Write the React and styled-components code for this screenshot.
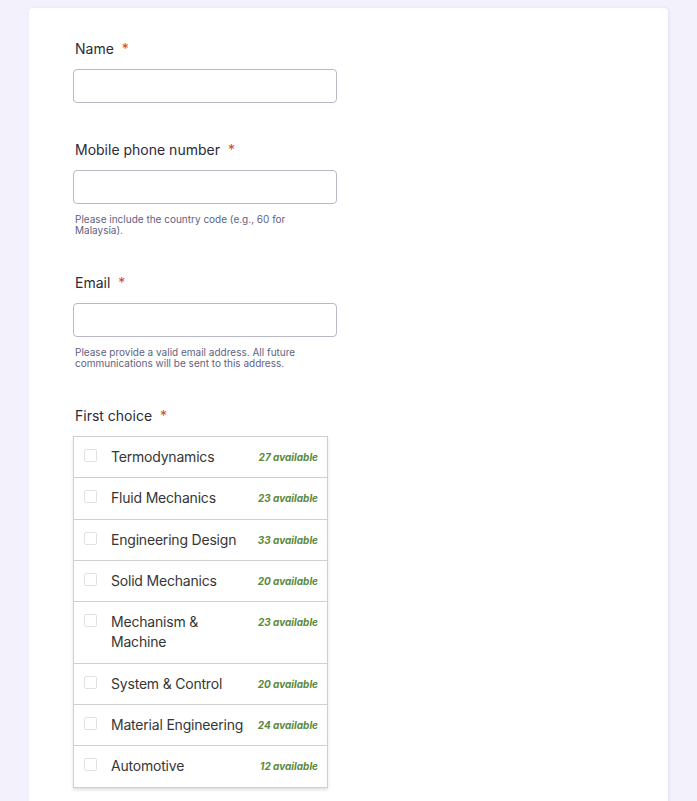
import React from 'react';
import styled, { createGlobalStyle } from 'styled-components';

const GlobalStyle = createGlobalStyle`
    html, body {
        margin: 0;
        padding: 0;
        background-color: #f3f1fc;
        font-family: Inter, "Noto Sans", sans-serif;
    }
    * {
        box-sizing: border-box;
    }
`;

const Page = styled.div`
    padding: 8px 29px 0 29px;
`;

const FormCard = styled.div`
    background-color: white;
    border-radius: 4px;
    box-shadow: 1px 0px 3px rgba(120, 100, 200, 0.12);
    padding: 31px 44px 40px 44px;
    min-height: 793px;
`;

const Field = styled.div`
    margin-bottom: 37px;
    width: 264px;
`;

const Label = styled.div`
    font-size: 14px;
    line-height: 20px;
    font-weight: 400;
    color: #2a2a3a;
    padding-left: 2px;
    margin-bottom: 10px;
`;

const Required = styled.span`
    color: #d4472a;
    margin-left: 8px;
`;

const TextInput = styled.input`
    display: block;
    width: 264px;
    height: 34px;
    border: 1px solid #bbb9c8;
    border-radius: 4px;
    padding: 0 10px;
    font-family: inherit;
    font-size: 14px;
    outline: none;
`;

const Help = styled.div`
    margin-top: 10px;
    padding-left: 2px;
    max-width: 252px;
    font-size: 10px;
    line-height: 11px;
    color: #5f6282;
`;

const ChoiceList = styled.div`
    width: 255px;
    border: 1px solid #cfcfcf;
    border-bottom: none;
    box-shadow: 0px 2px 3px rgba(0, 0, 0, 0.12);
`;

const ChoiceRow = styled.label`
    display: grid;
    grid-template-columns: 13px 1fr auto;
    column-gap: 14px;
    align-items: start;
    padding: 10px 9px 10px 10px;
    border-bottom: 1px solid #cfcfcf;
    cursor: pointer;
`;

const Box = styled.span`
    width: 13px;
    height: 13px;
    margin-top: 2px;
    border: 1px solid #e2e2e2;
    border-radius: 2px;
    background: white;
`;

const ChoiceText = styled.span`
    font-size: 14px;
    line-height: 20.3px;
    letter-spacing: -0.2px;
    color: #363636;
`;

const Available = styled.span`
    font-size: 10px;
    line-height: 20.3px;
    font-weight: 700;
    font-style: italic;
    color: #5a8a3c;
    white-space: nowrap;
`;

const choices = [
    { name: 'Termodynamics', left: 27 },
    { name: 'Fluid Mechanics', left: 23 },
    { name: 'Engineering Design', left: 33 },
    { name: 'Solid Mechanics', left: 20 },
    { name: 'Mechanism & Machine', left: 23 },
    { name: 'System & Control', left: 20 },
    { name: 'Material Engineering', left: 24 },
    { name: 'Automotive', left: 12 },
];

const App = () => {
    return (
        <Page>
            <GlobalStyle />
            <FormCard>
                <Field>
                    <Label>Name<Required>*</Required></Label>
                    <TextInput type="text" />
                </Field>
                <Field>
                    <Label>Mobile phone number<Required>*</Required></Label>
                    <TextInput type="tel" />
                    <Help>Please include the country code (e.g., 60 for Malaysia).</Help>
                </Field>
                <Field>
                    <Label>Email<Required>*</Required></Label>
                    <TextInput type="email" />
                    <Help>Please provide a valid email address. All future communications will be sent to this address.</Help>
                </Field>
                <Field>
                    <Label>First choice<Required>*</Required></Label>
                    <ChoiceList>
                        { choices.map((c) => (
                            <ChoiceRow key={ c.name }>
                                <Box />
                                <ChoiceText>{ c.name }</ChoiceText>
                                <Available>{ c.left } available</Available>
                            </ChoiceRow>
                        )) }
                    </ChoiceList>
                </Field>
            </FormCard>
        </Page>
    );
};

export default App;
